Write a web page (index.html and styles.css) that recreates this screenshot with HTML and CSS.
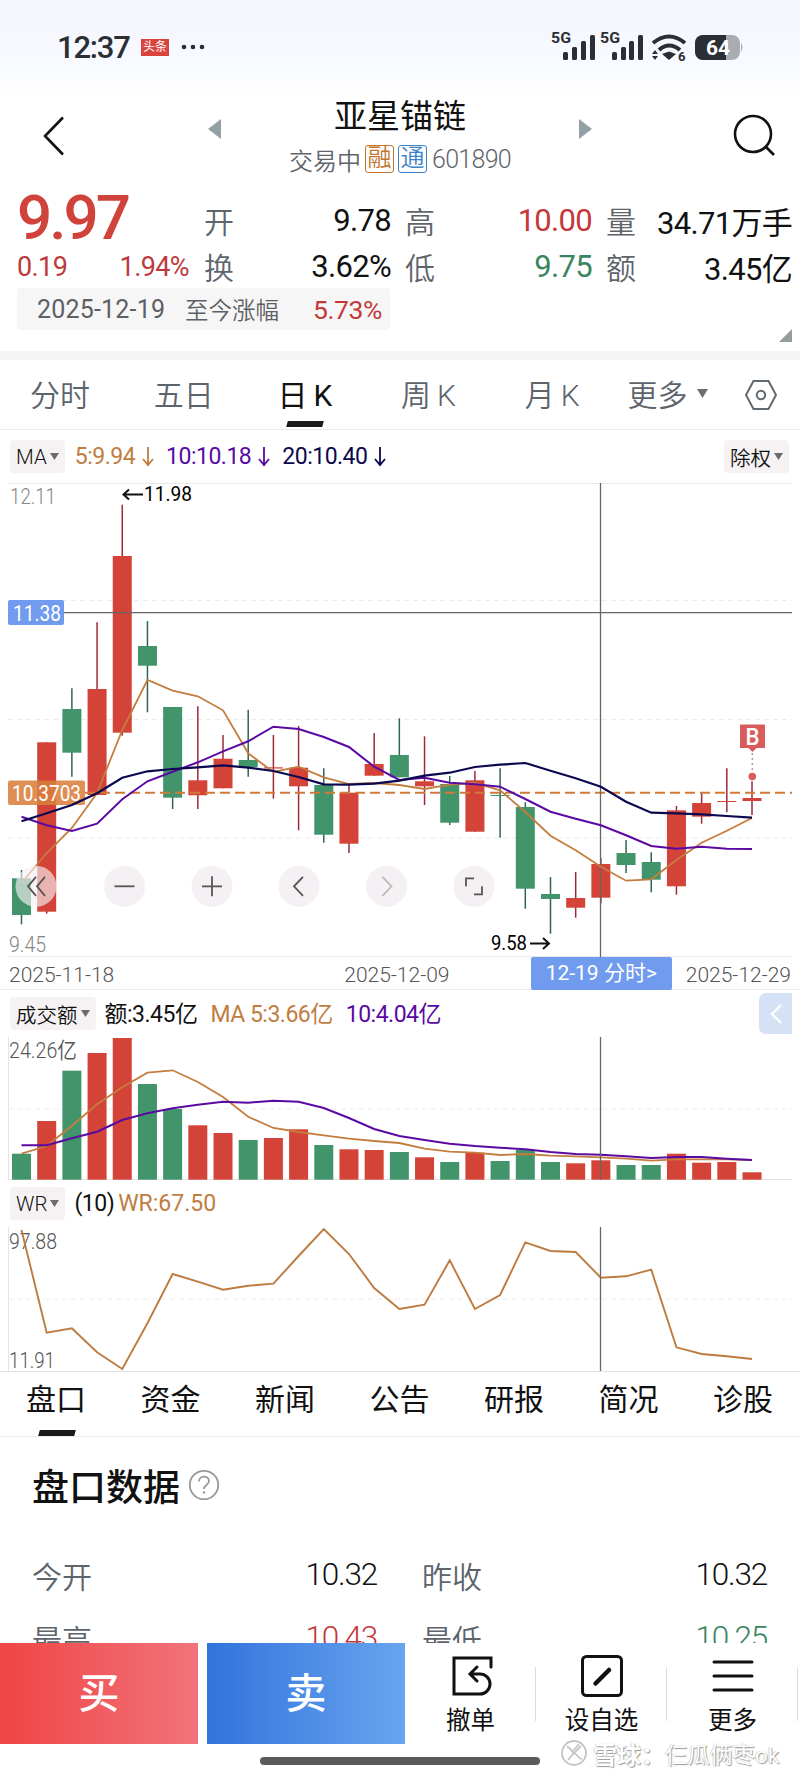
FILE: index.html
```html
<!DOCTYPE html>
<html lang="zh-CN">
<head>
    <meta charset="UTF-8">
    <meta name="viewport" content="width=device-width, initial-scale=1.0">
    <title>亚星锚链 601890</title>
    <link rel="stylesheet" href="styles.css">
</head>
<body>
<div class="page">
    <div class="statusbar">
        <span class="clock">12:37</span>
        <span class="toutiao">头条</span>
        <svg class="dots" width="26" height="6"><circle cx="3" cy="3" r="2.3"/><circle cx="12" cy="3" r="2.3"/><circle cx="21" cy="3" r="2.3"/></svg>
        <svg class="signals" width="200" height="40" viewBox="0 0 200 40">
            <g class="net"><text x="1" y="14" textLength="20" lengthAdjust="spacingAndGlyphs">5G</text><text x="50" y="14" textLength="20" lengthAdjust="spacingAndGlyphs">5G</text></g>
            <g fill="#2b2e33">
                <rect x="13" y="23" width="5" height="8" rx="1.5"/><rect x="22" y="18" width="5" height="13" rx="1.5"/><rect x="31" y="12" width="5" height="19" rx="1.5"/><rect x="40" y="6" width="5" height="25" rx="1.5"/>
                <rect x="62" y="23" width="5" height="8" rx="1.5"/><rect x="71" y="18" width="5" height="13" rx="1.5"/><rect x="79" y="12" width="5" height="19" rx="1.5"/><rect x="88" y="6" width="5" height="25" rx="1.5"/>
                <path d="M112 25l7-2.5 7 2.5-7 6zM102 25l3-4 3 4zM102 27l3 4 3-4z"/>
            </g>
            <g fill="none" stroke="#2b2e33" stroke-width="4"><path d="M103 14Q119 1 135 14"/><path d="M109 21Q119 12 130 21"/></g>
            <text class="wifi6" x="128" y="32">6</text>
            <rect x="145" y="6" width="45" height="25" rx="8" fill="#a9acb0"/>
            <path d="M191 14q3 4 0 9z" fill="#a9acb0"/>
            <path d="M153 6h23v25h-23a8 8 0 0 1-8-8V14a8 8 0 0 1 8-8z" fill="#2b2e33"/>
            <text class="battery" x="156" y="26" textLength="24" lengthAdjust="spacingAndGlyphs">64</text>
        </svg>
    </div>

    <div class="header">
        <svg class="back" width="24" height="40"><path d="M21 1.5L3 20l18 18.5" fill="none" stroke="#111" stroke-width="2.6"/></svg>
        <svg class="prev" width="13" height="20"><path d="M13 0v20L0 10z" fill="#94a0a6"/></svg>
        <div class="name">
            <h1>亚星锚链</h1>
            <div class="code"><span>交易中</span><i class="rong">融</i><i class="tong">通</i><span class="num">601890</span></div>
        </div>
        <svg class="next" width="13" height="20"><path d="M0 0v20l13-10z" fill="#94a0a6"/></svg>
        <svg class="search" width="44" height="44" fill="none" stroke="#111" stroke-width="2.6"><circle cx="20" cy="20" r="18"/><path d="M32 32l9 9"/></svg>
    </div>

    <div class="quote">
        <div class="last">
            <div class="price">9.97</div>
            <div class="change"><span>0.19</span><span>1.94%</span></div>
        </div>
        <div class="pairs">
            <div class="pair"><label>开</label><b>9.78</b></div>
            <div class="pair"><label>高</label><b class="up">10.00</b></div>
            <div class="pair"><label>量</label><b>34.71万手</b></div>
            <div class="pair"><label>换</label><b>3.62%</b></div>
            <div class="pair"><label>低</label><b class="down">9.75</b></div>
            <div class="pair"><label>额</label><b>3.45亿</b></div>
        </div>
    </div>
    <div class="since-row">
        <div class="since"><span class="date">2025-12-19</span><span>至今涨幅</span><span class="pct">5.73%</span></div>
        <svg width="13" height="13"><path d="M13 0v13H0z" fill="#969b9d"/></svg>
    </div>

    <div class="periods">
        <span>分时</span><span>五日</span><span class="active">日<em>K</em></span><span>周<em>K</em></span><span>月<em>K</em></span>
        <span class="more">更多<svg width="11" height="9"><path d="M0 0h11L5.500 9z" fill="#6a7076"/></svg></span>
        <svg class="setting" width="34" height="32" fill="none" stroke="#626970" stroke-width="2"><path d="M9.500 2h15L32 16l-7.500 14h-15L2 16z"/><circle cx="17" cy="16" r="4.200"/></svg>
    </div>

    <div class="legend ma">
        <span class="drop">MA<svg width="9" height="7"><path d="M0 0h9L4.500 7z"/></svg></span>
        <span class="c5">5:9.94<svg class="arr" width="12" height="20"><path d="M6 0v18M1 12l5 6 5-6"/></svg></span>
        <span class="c10">10:10.18<svg class="arr" width="12" height="20"><path d="M6 0v18M1 12l5 6 5-6"/></svg></span>
        <span class="c20">20:10.40<svg class="arr" width="12" height="20"><path d="M6 0v18M1 12l5 6 5-6"/></svg></span>
        <span class="drop right">除权<svg width="9" height="7"><path d="M0 0h9L4.500 7z"/></svg></span>
    </div>

    <svg id="kline" class="chart" width="800" height="474"></svg>

    <div class="dates">
        <span>2025-11-18</span>
        <span class="mid">2025-12-09</span>
        <span class="pick">12-19 分时&gt;</span>
        <span>2025-12-29</span>
    </div>

    <div class="legend vol">
        <span class="drop">成交额<svg width="9" height="7"><path d="M0 0h9L4.500 7z"/></svg></span>
        <span class="amount">额:3.45亿</span>
        <span class="c5">MA 5:3.66亿</span>
        <span class="c10">10:4.04亿</span>
        <span class="fold"><svg width="12" height="20"><path d="M11 1L2 10l9 9" fill="none" stroke="#fff" stroke-width="2.400"/></svg></span>
    </div>
    <svg id="volume" class="chart" width="800" height="143"></svg>

    <div class="legend wr">
        <span class="drop">WR<svg width="9" height="7"><path d="M0 0h9L4.500 7z"/></svg></span>
        <span class="amount">(10)</span>
        <span class="c5">WR:67.50</span>
    </div>
    <svg id="wr" class="chart" width="800" height="144"></svg>

    <div class="tabs">
        <span class="active">盘口</span><span>资金</span><span>新闻</span><span>公告</span><span>研报</span><span>简况</span><span>诊股</span>
    </div>

    <div class="data">
        <h2>盘口数据<svg width="32" height="32"><circle cx="16" cy="16" r="14.200"/><path d="M11 12.500c0-6.500 10-6.500 10-.500 0 4-5 4-5 8"/><circle class="dot" cx="16" cy="23.500" r="1.300"/></svg></h2>
        <div class="cells">
            <div><label>今开</label><b>10.32</b></div>
            <div><label>昨收</label><b>10.32</b></div>
            <div><label>最高</label><b class="up">10.43</b></div>
            <div><label>最低</label><b class="down">10.25</b></div>
        </div>
    </div>

    <div class="bottombar">
        <div class="buy">买</div>
        <div class="sell">卖</div>
        <div class="tool">
            <svg width="44" height="44"><path d="M42 13V4H5v36h26a9.800 9.800 0 0 0 0-20H22M28 13l-7 7 7 7"/></svg>
            <span>撤单</span>
        </div>
        <div class="tool">
            <svg width="44" height="44"><rect x="2.500" y="2.500" width="39" height="39" rx="4"/><path d="M15.500 29.500L29 16" stroke-width="4.500"/></svg>
            <span>设自选</span>
        </div>
        <div class="tool">
            <svg width="44" height="44"><path d="M3 8h38M3 22h38M3 36h38"/></svg>
            <span>更多</span>
        </div>
    </div>
    <div class="home"></div>
    <div class="watermark">
        <svg width="28" height="28" fill="none" stroke="#c4c4c4" stroke-width="1.800"><circle cx="14" cy="14" r="12"/><path d="M7 8c4 0 4 5 7 6s5 6 8 6M21 7l-7 7-6 7M19 5l-6 7"/></svg>
        <strong>雪球：</strong><span>仨瓜俩枣ok</span>
    </div>
</div>

<script>
    const RED = '#d34338', GREEN = '#42946a';
    const ORANGE = '#c47d3e', PURPLE = '#5a0aa2', NAVY = '#0b0850';
    const x = i => 21.5 + i * 25.19;

    // [direction, high, top, bottom, low]
    const candles = [
        [0, 387, 395.3, 432, 441.3], [1, 259.3, 259.3, 428.7, 430.7], [0, 205.3, 226, 269.7, 293.7],
        [1, 139.3, 206, 312, 312], [1, 21.7, 73, 249.7, 252.7], [0, 138, 163, 182.7, 229.3],
        [0, 224, 224, 314.7, 326], [1, 223.3, 297.3, 312.3, 326], [1, 252, 275.7, 305.3, 305.3],
        [0, 226.7, 277, 284, 293.7], [1, 252, 284.3, 285.5, 315.7], [1, 243, 284.7, 303.3, 347.3],
        [0, 285.3, 302, 351.7, 359.7], [1, 301.3, 309.7, 360.7, 370], [1, 250, 281, 292.7, 292.7],
        [0, 235.3, 272, 294.3, 294.3], [1, 253.3, 298.3, 303.3, 322], [0, 293, 301, 339.7, 342],
        [1, 288, 297.3, 348.7, 348.7], [0, 285.3, 312, 313, 354.7], [0, 319.3, 324, 405.7, 425.7],
        [0, 394, 411, 416, 450.7], [1, 389, 415, 424.7, 434.7], [1, 375, 381, 414.7, 420.3],
        [0, 357, 370, 382, 390], [0, 369.3, 379, 396.7, 409.3], [1, 323, 327.3, 403.3, 411.7],
        [1, 309, 320, 333.7, 340.7], [1, 285.3, 318, 319, 329.3], [1, 298.3, 315, 318, 332]
    ];
    const ma5 = [400,370,345,310,247,197,207.7,213.3,227.3,270.3,289,283.7,294.3,301,300,302,306,301.7,300,307.3,329,352.7,367.3,383.7,397.7,396.3,377,359.7,347.7,335];
    const ma10 = [333.7,342.3,348,340.7,316.3,298.3,288.7,279.3,268.3,258.3,243.7,246,254,264,283.7,297,294.7,299.7,301.3,303.7,316,328.7,335.7,342.3,352.3,363,365.7,363.7,365.7,366];
    const ma20 = [338.3,330.3,322,310.3,294.7,288.3,286,284.3,282.3,284.7,288,294,301.3,301.7,300.7,297.7,292.7,289.7,284,281.7,280,287.7,295.3,303.7,318.7,329.7,330.3,331.3,333,334.7];
    const vols = [116.7,84,33.7,16,1,47,72,88.3,96,103,101,92.3,108,112.3,113,115,120.3,125,115.7,124,113,125,126.3,123.3,128,128,116.7,125.7,125,135.3];
    const volMa5 = [116.7,109,88.7,67.3,50.3,35.7,33.3,45,60,79.7,91,95,98.3,101.7,104,106,111.7,114.7,115.7,118,117,118.7,119.3,120.3,121.7,123.7,122.3,122.3,122.3,123];
    const volMa10 = [108.3,108.3,101.3,94.7,83,76.3,71.3,67.7,64.7,65.7,63.7,64.7,71,81,92,99,103,106.7,109,110.7,112.3,115,117,117.7,119.3,121,120,120,121.7,123];
    const wr = [3,105.7,101.3,125.3,142,96.3,47,54.7,62.7,58.7,56.7,29,2,27,61,82,77.7,33.3,82,68,15.3,24,25,50.7,49.3,42.7,120.3,127,129.3,132];

    function line(ys, color, w) {
        return `<polyline points="${ys.map((y, i) => x(i) + ',' + y).join(' ')}" fill="none" stroke="${color}" stroke-width="${w}"/>`;
    }
    function grid(y) {
        return `<path d="M8 ${y}H792" stroke="#ececec" stroke-dasharray="5 4"/>`;
    }
    function label(str, tx, ty, w, cls) {
        return `<text x="${tx}" y="${ty}" textLength="${w}" lengthAdjust="spacingAndGlyphs" class="${cls}">${str}</text>`;
    }
    function button(cx, d, color, opacity) {
        return `<circle cx="${cx}" cy="403.300" r="20.500" fill="#f4f0f3" fill-opacity="${opacity}"/>
            <path transform="translate(${cx} 403.300)" d="${d}" fill="none" stroke="${color}" stroke-width="1.800"/>`;
    }

    // K线
    let k = '<path d="M8 .5H792M8 473.500H792" stroke="#e9e9e9"/>' + grid(117.5) + grid(236.5) + grid(355);
    candles.forEach(([up, high, top, bottom, low], i) => {
        k += `<path d="M${x(i)} ${high}V${low}" stroke="${up ? '#9c2a38' : '#2c6650'}" stroke-width="1.500"/>
            <rect x="${x(i) - 9.5}" y="${top}" width="19" height="${bottom - top}" fill="${up ? RED : GREEN}"/>`;
    });
    k += '<path d="M85 309.700H792" stroke="#cf7a3a" stroke-width="2" stroke-dasharray="10 5"/>';
    k += '<path d="M64 129.700H792M600.500 0V474" stroke="#66666a" stroke-width="1.300"/>';
    k += '<rect x="8" y="297.500" width="77" height="24.500" rx="2" fill="#d97f3d" fill-opacity=".88"/>';
    k += line(ma5, ORANGE, 1.8) + line(ma10, PURPLE, 2) + line(ma20, NAVY, 2.2);
    k += label('10.3703', 12, 318, 69, 'white');
    k += '<rect x="8" y="117" width="56" height="25" rx="2" fill="#709bee"/>' + label('11.38', 13, 137.5, 48, 'white');
    k += label('12.11', 10, 20.5, 46, 'axis') + label('9.45', 9, 469, 37, 'axis');
    k += '<path d="M123 11.500h20M129 6.500l-5.500 5 5.500 5" fill="none" stroke="#111" stroke-width="2"/>' + label('11.98', 144, 18, 48, 'mark');
    k += '<path d="M530 460.500h19M543 455l6 5.500-6 5.500" fill="none" stroke="#111" stroke-width="2"/>' + label('9.58', 491, 467, 36, 'mark');
    k += '<path d="M741 241.500h23a1 1 0 0 1 1 1V265h-8.500l-4 4-4-4H740v-22.500a1 1 0 0 1 1-1z" fill="#d95c5c"/>' + label('B', 745.5, 261.5, 14, 'flag');
    k += '<path d="M752.300 270v18" stroke="#bb9999" stroke-width="1.500" stroke-dasharray="2 3"/><circle cx="752.300" cy="293.500" r="3.800" fill="#d95c5c"/>';
    k += button(36, 'M0 -9.500L-8 0 0 9.500M9 -9.500L1 0 9 9.500', '#555', .65);
    k += button(124.5, 'M-10 0H10', '#555', 1) + button(212, 'M-10 0H10M0 -10V10', '#555', 1);
    k += button(299, 'M4 -9.500L-5 0 4 9.500', '#555', 1) + button(386.5, 'M-4 -9.500L5 0 -4 9.500', '#bbb', 1);
    k += button(474, 'M-8 0V-8H0M8 0V8H0', '#555', 1);
    document.getElementById('kline').innerHTML = k;

    // 成交额
    let v = '<path d="M8.500 0V143M8 142.500H792" stroke="#e3e3e3"/>' + grid(72) + label('24.26亿', 9, 21, 68, 'axis dark');
    vols.forEach((y, i) => {
        v += `<rect x="${x(i) - 9.5}" y="${y}" width="19" height="${142.7 - y}" fill="${candles[i][0] ? RED : GREEN}"/>`;
    });
    v += line(volMa5, ORANGE, 1.8) + line(volMa10, PURPLE, 2) + '<path d="M600.500 0V143" stroke="#66666a" stroke-width="1.300"/>';
    document.getElementById('volume').innerHTML = v;

    // WR
    document.getElementById('wr').innerHTML = '<path d="M8.500 0V144" stroke="#e3e3e3"/>' + grid(72)
        + label('97.88', 9, 21.5, 48, 'axis dark') + label('11.91', 9, 140.5, 46, 'axis dark')
        + line(wr, '#bd7b40', 1.9) + '<path d="M600.500 0V144" stroke="#66666a" stroke-width="1.300"/>';
</script>
</body>
</html>
```
FILE: styles.css
```css
* {
    box-sizing: border-box;
}
body {
    margin: 0;
    background: #fff;
    color: #111;
    font-family: Roboto, "Noto Sans CJK SC", sans-serif;
}
.page {
    position: relative;
    width: 800px;
    height: 1778px;
    overflow: hidden;
    background: linear-gradient(#f5f5fe, #f8faff 60px, #fff 100px);
}
svg {
    display: block;
    flex: none;
}
em, i {
    font-style: normal;
}
.up {
    color: #c5383a;
}
.down {
    color: #3a8560;
}

/* status bar */
.statusbar {
    display: flex;
    align-items: center;
    height: 94px;
    padding-left: 57px;
}
.clock {
    width: 73px;
    font-size: 31px;
    font-weight: 500;
    letter-spacing: -1.2px;
    color: #2b2e33;
}
.toutiao {
    width: 28px;
    height: 17px;
    margin-left: 11px;
    background: #d8443c;
    color: #fff;
    font-size: 12px;
    line-height: 17px;
    text-align: center;
}
.dots {
    margin-left: 12px;
    fill: #2b2e33;
}
.signals {
    margin: 4px 0 0 343px;
}
.net text {
    font-size: 15px;
    font-weight: 700;
    fill: #2b2e33;
}
.wifi6 {
    font-size: 13px;
    font-weight: 700;
    fill: #2b2e33;
}
.battery {
    font-size: 20px;
    font-weight: 700;
    fill: #fff;
}

/* header */
.header {
    display: flex;
    height: 96px;
    padding: 0 23px 0 42px;
}
.back {
    margin-top: 22px;
}
.prev {
    margin: 25px 0 0 142px;
}
.name {
    width: 358px;
    text-align: center;
}
.name h1 {
    margin: 0;
    font-size: 33px;
    font-weight: 400;
    line-height: 46px;
}
.code {
    display: flex;
    justify-content: center;
    align-items: center;
    gap: 4px;
    height: 28px;
    margin-top: 5px;
    color: #5f656c;
    font-size: 24px;
    font-weight: 350;
}
.code i {
    width: 29px;
    height: 28px;
    border: 1px solid;
    border-radius: 3px;
    line-height: 25px;
}
.code .num {
    margin-left: 1px;
    font-size: 25px;
    letter-spacing: -0.7px;
}
.rong {
    color: #c0762c;
}
.tong {
    color: #3e83c8;
}
.next {
    margin-top: 25px;
}
.search {
    margin: 20px 0 0 141px;
}

/* quote */
.quote {
    display: flex;
    height: 98px;
    padding: 0 8px 0 17px;
}
.last {
    width: 172px;
    margin-right: 15px;
    color: #d0433b;
}
.price {
    height: 58px;
    font-size: 62px;
    font-weight: 500;
    line-height: 56px;
    letter-spacing: -3px;
}
.change {
    display: flex;
    justify-content: space-between;
    font-size: 27px;
    line-height: 38px;
    letter-spacing: -0.6px;
    color: #bd3a3c;
}
.pairs {
    display: grid;
    grid-template-columns: 187px 187px 186px;
    grid-template-rows: 46px 46px;
    column-gap: 14px;
    padding-top: 7px;
}
.pair {
    display: flex;
    justify-content: space-between;
    align-items: center;
    white-space: nowrap;
}
.pair label {
    font-size: 30px;
    font-weight: 350;
    color: #5d646c;
}
.pair b {
    font-size: 31px;
    font-weight: 400;
    letter-spacing: -0.7px;
}
.since-row {
    display: flex;
    justify-content: space-between;
    align-items: flex-end;
    box-sizing: content-box;
    height: 54px;
    padding: 0 8px 9px 17px;
    border-bottom: 9px solid #f5f5f5;
}
.since {
    display: flex;
    align-items: center;
    align-self: flex-start;
    width: 373px;
    height: 42px;
    padding: 0 8px 0 20px;
    background: #f6f6f6;
    border-radius: 4px;
    color: #5d6064;
    font-size: 23.5px;
    font-weight: 350;
}
.since .date {
    width: 148px;
    font-size: 25px;
    font-weight: 400;
    letter-spacing: 0.2px;
}
.since .pct {
    margin-left: auto;
    color: #c5383a;
    font-size: 26.5px;
    letter-spacing: -0.4px;
    font-weight: 400;
}

/* period tabs */
.periods {
    display: flex;
    align-items: center;
    height: 70px;
    padding: 0 0 3px 30px;
    border-bottom: 1px solid #ececec;
    color: #5d646c;
    font-size: 30px;
    font-weight: 350;
}
.periods span {
    width: 123.700px;
    white-space: nowrap;
}
.periods em {
    margin-left: 6px;
}
.periods .active {
    color: #111;
    font-weight: 400;
}
.periods .active, .tabs .active {
    position: relative;
}
.active::after {
    content: "";
    position: absolute;
    left: 10px;
    bottom: -12px;
    width: 36px;
    height: 6px;
    background: #1a1a1a;
    transform: skewX(-15deg);
}
.periods .more {
    display: flex;
    align-items: center;
    gap: 10px;
    width: 100px;
    margin-left: -21px;
}
.setting {
    margin: 3px 0 0 17px;
}

/* chart legends */
.legend {
    display: flex;
    align-items: center;
    padding-left: 10px;
    font-size: 23px;
    white-space: nowrap;
    letter-spacing: -0.5px;
}
.drop {
    display: flex;
    align-items: center;
    gap: 3px;
    height: 33px;
    padding: 0 6px;
    background: #f6f2f4;
    border-radius: 4px;
    font-size: 20.500px;
    font-weight: 350;
    letter-spacing: 0;
}
.drop svg {
    fill: #6b6b6b;
}
.ma {
    height: 53px;
}
.ma span:not(.drop) {
    display: flex;
    align-items: center;
    gap: 7px;
    margin-left: 12px;
    letter-spacing: -0.5px;
}
.ma span.c5 {
    margin-left: 10px;
}
.arr {
    fill: none;
    stroke: currentColor;
    stroke-width: 1.800;
}
.right {
    margin: 0 11px 0 auto;
}
.c5 {
    color: #c07d42;
}
.c10 {
    color: #5a0aa2;
}
.c20 {
    color: #0b0850;
}

/* chart texts */
.chart {
    font-size: 22px;
}
.axis {
    fill: #858585;
    font-weight: 350;
}
.dark {
    fill: #555;
}
.white {
    fill: #fff;
}
.mark {
    font-size: 21px;
}
.flag {
    fill: #fff;
    font-size: 23px;
    font-weight: 500;
}
.dates {
    display: flex;
    align-items: center;
    height: 33px;
    padding: 3px 9px 0;
    border-bottom: 1px solid #ececec;
    color: #555;
    font-size: 21px;
    font-weight: 350;
}
.dates .mid {
    margin-left: 230px;
}
.dates .pick {
    width: 141px;
    height: 33px;
    margin: -3px 14px 0 auto;
    background: #709bee;
    border-radius: 2px;
    color: #fff;
    font-weight: 400;
    line-height: 32px;
    text-align: center;
}
.vol {
    height: 47px;
}
.vol .amount, .wr .amount {
    margin-left: 9px;
}
.vol .amount, .vol .c5, .vol .c10 {
    padding-bottom: 4px;
}
.vol .c5, .vol .c10 {
    margin-left: 13px;
}
.fold {
    display: flex;
    align-items: center;
    justify-content: center;
    width: 33px;
    height: 41px;
    margin: 0 8px 0 auto;
    background: #d5e2f5;
    border-radius: 7px 0 0 7px;
}
.wr {
    height: 47px;
}
.wr .c5 {
    margin-left: 4px;
    letter-spacing: 0;
}

/* info tabs */
.tabs {
    display: flex;
    justify-content: space-between;
    height: 66px;
    padding: 0 27px 0 26px;
    border-top: 1px solid #e2e2e2;
    border-bottom: 1px solid #ececec;
    font-size: 30px;
    line-height: 56px;
}
.tabs .active::after {
    left: 13px;
    bottom: 0;
}

/* data */
.data {
    padding: 21px 32px 0 32px;
}
.data h2 {
    display: flex;
    align-items: center;
    gap: 8px;
    margin: 0;
    height: 54px;
    font-size: 37px;
    font-weight: 500;
}
.data h2 svg {
    fill: none;
    stroke: #999;
    stroke-width: 1.800;
}
.data h2 .dot {
    fill: #999;
    stroke: none;
}
.cells {
    display: grid;
    grid-template-columns: 345px 345px;
    grid-template-rows: 63px 63px;
    column-gap: 45px;
    padding-top: 31px;
}
.cells div {
    display: flex;
    justify-content: space-between;
    align-items: center;
    font-size: 30px;
}
.cells label {
    color: #5d646c;
    font-weight: 350;
}
.cells b {
    font-size: 31.500px;
    font-weight: 350;
    letter-spacing: -1.2px;
}

/* bottom bar */
.bottombar {
    position: absolute;
    left: 0;
    top: 1643px;
    display: flex;
    width: 800px;
    height: 135px;
    background: #fff;
}
.buy, .sell {
    width: 198px;
    height: 101px;
    margin-right: 9px;
    background: linear-gradient(90deg, #ef4545, #f2737b);
    color: #fff;
    font-size: 41px;
    font-weight: 500;
    line-height: 102px;
    text-align: center;
}
.sell {
    margin-right: 0;
    background: linear-gradient(90deg, #3273dc, #67a5ee);
}
.tool {
    position: relative;
    display: flex;
    flex-direction: column;
    align-items: center;
    width: 131px;
    padding-top: 11px;
    font-size: 24.5px;
}
.tool span {
    margin-top: 4px;
    line-height: 38px;
}
.tool svg {
    fill: none;
    stroke: #111;
    stroke-width: 3;
    stroke-linecap: round;
}
.tool::after {
    content: "";
    position: absolute;
    right: 0;
    top: 24px;
    width: 1px;
    height: 54px;
    background: #ddd;
}
.home {
    position: absolute;
    left: 260px;
    top: 1757px;
    width: 280px;
    height: 8px;
    border-radius: 4px;
    background: #5b5b5b;
}
.watermark {
    position: absolute;
    left: 560px;
    top: 1738px;
    display: flex;
    align-items: center;
    height: 30px;
    color: #fff;
    font-size: 22.500px;
    text-shadow: 1px 1px 1px #999, -0.5px -0.5px 1px #bbb;
    white-space: nowrap;
}
.watermark strong {
    margin-left: 5px;
    font-size: 24px;
}
```
